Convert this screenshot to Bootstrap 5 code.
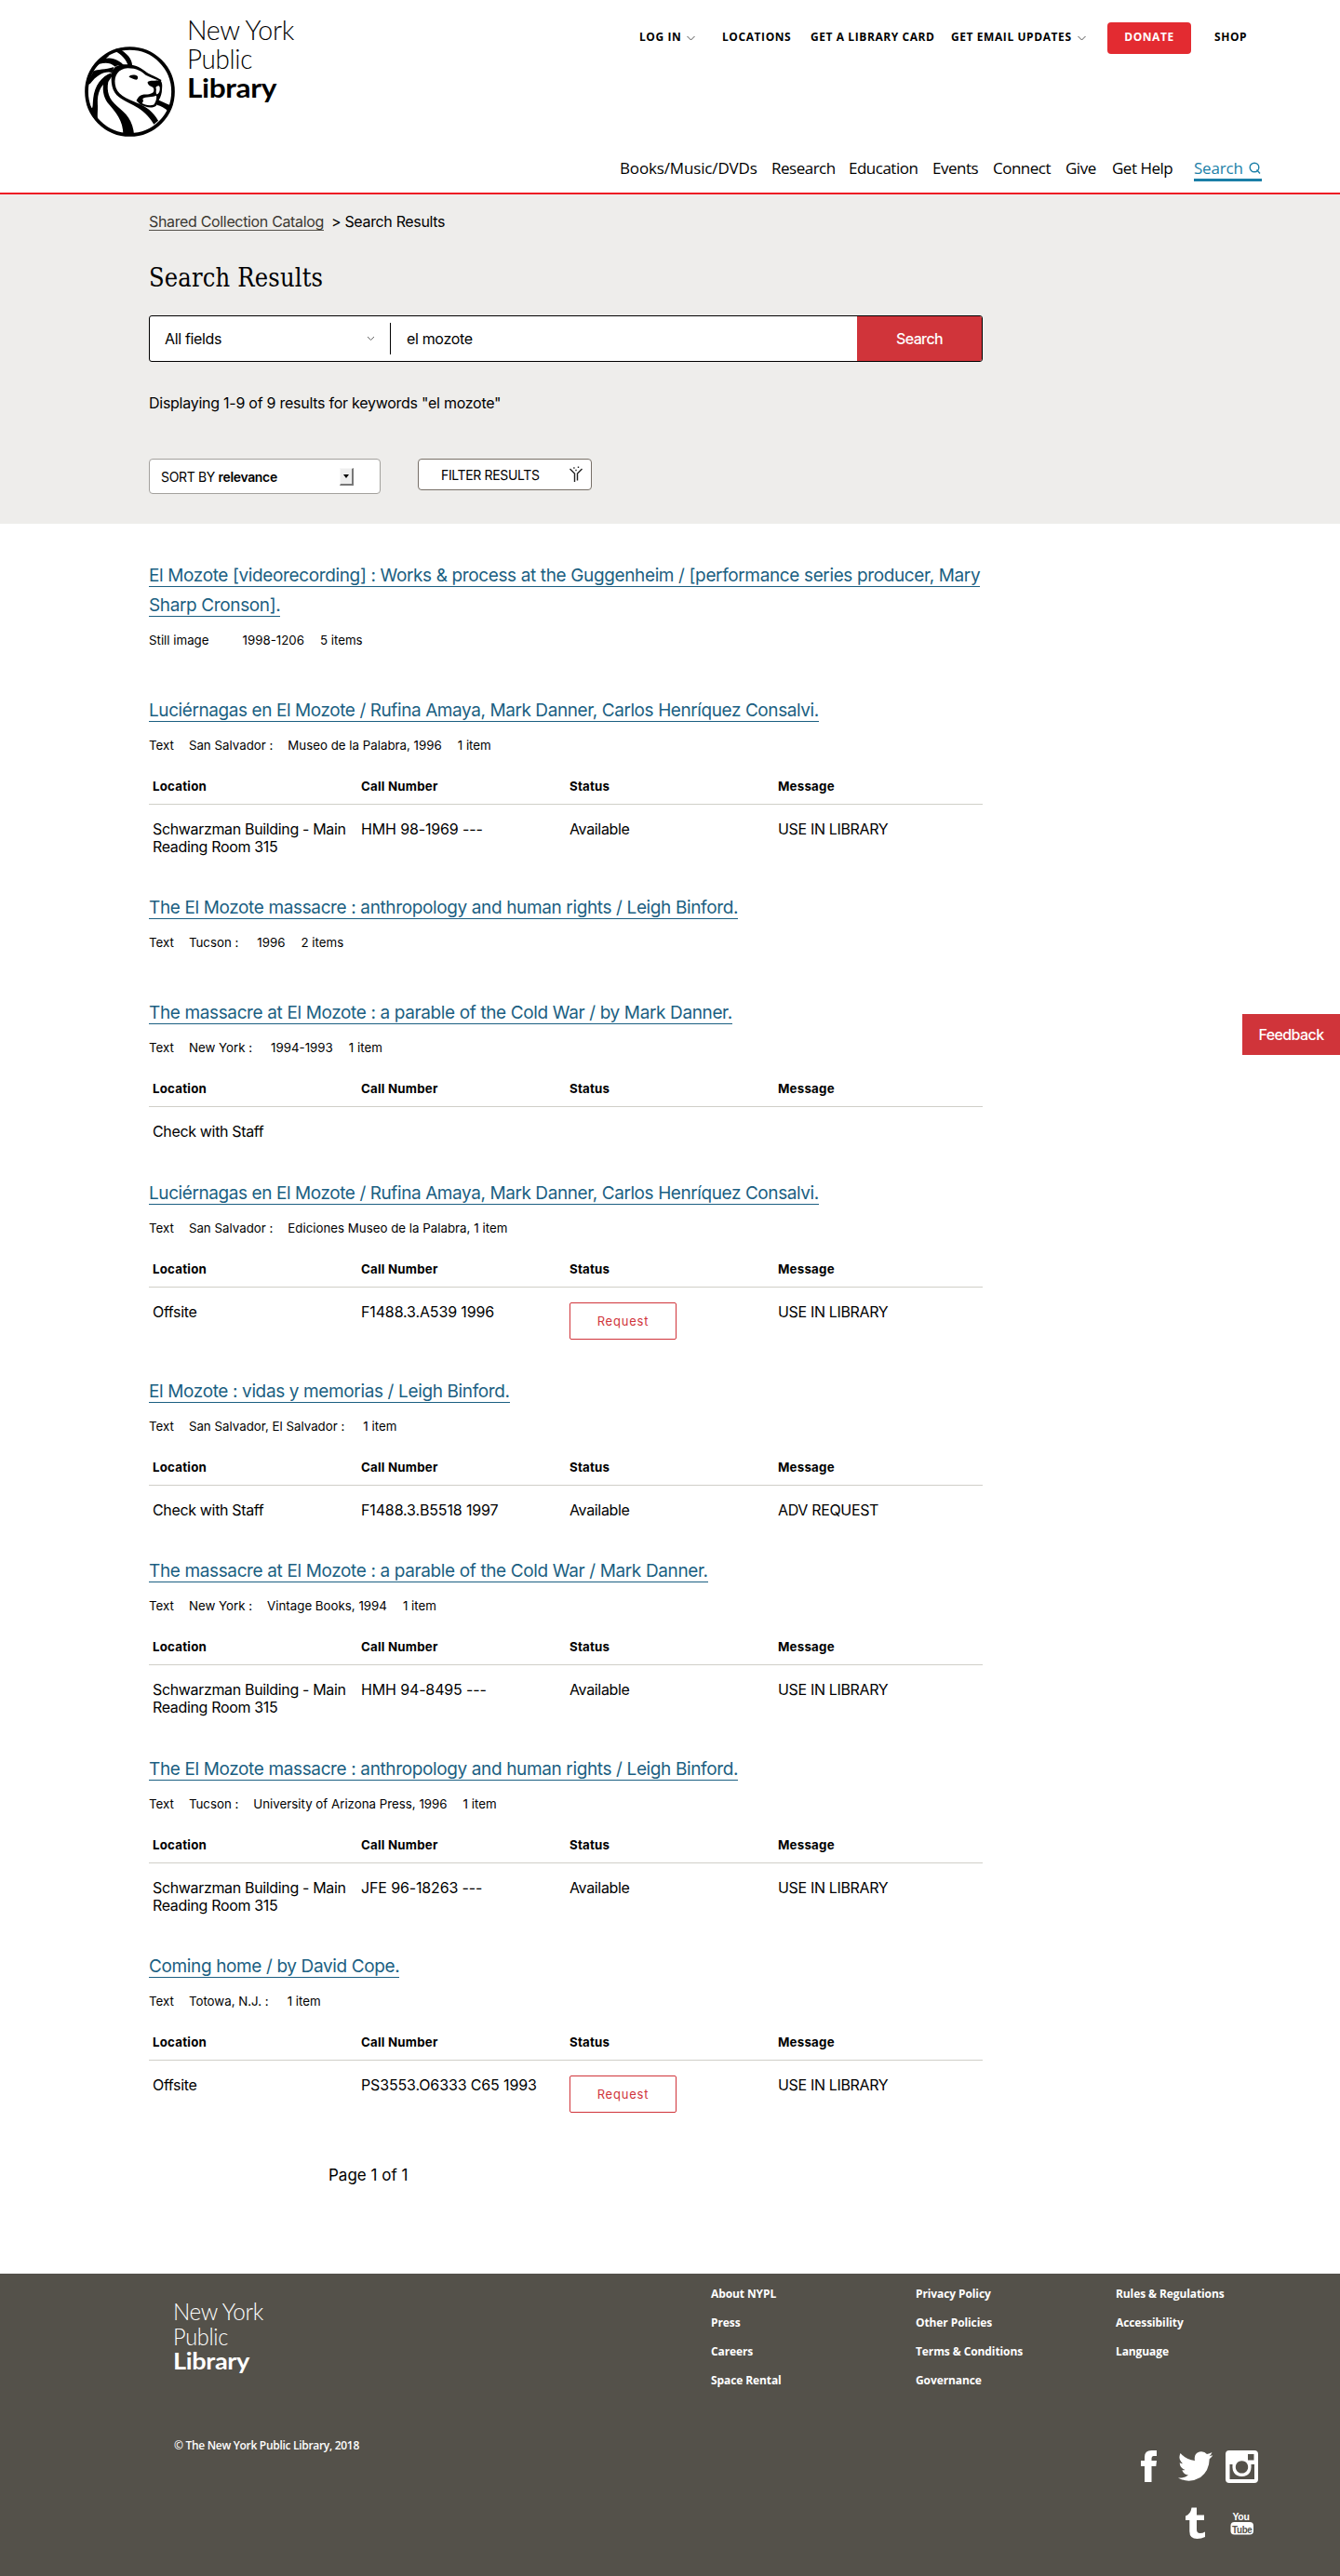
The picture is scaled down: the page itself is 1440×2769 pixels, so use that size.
<!DOCTYPE html>
<html lang="en">
<head>
<meta charset="utf-8">
<title>Shared Collection Catalog | NYPL</title>
<meta name="viewport" content="width=device-width, initial-scale=1">
<link rel="stylesheet" href="https://cdn.jsdelivr.net/npm/bootstrap@5.3.0/dist/css/bootstrap.min.css">
<style>
body{font-family:Inter,"Liberation Sans",sans-serif;font-size:16px;letter-spacing:-.34px;color:#000;background:#fff}
a{color:inherit;text-decoration:none}
.wrap{width:896px;margin-left:160px}
.kievit{font-family:"Open Sans","Noto Sans",sans-serif}
/* header */
.site-head{height:209px;border-bottom:2px solid #ed1c24;padding-left:91px}
.lion{width:97px;height:97px;margin-top:50px}
.wordmark{margin:12px 0 0 12px}
.util-nav{display:grid;grid-template-columns:89px 95px 151px 168px 115px 36px;height:34px;margin:24px 0 0 596px;font-size:12px;font-weight:700;line-height:32px;letter-spacing:.58px;white-space:nowrap}
.util-nav svg{margin-left:6px}
.donate{width:90px;height:34px;background:#e32b31;color:#fff;border-radius:4px;text-align:center}
.main-nav{display:grid;grid-template-columns:163px 83px 90px 65px 78px 50px 88px 73px;margin:111px 0 0 575px;font-size:17px;line-height:24px;letter-spacing:-.5px;white-space:nowrap}
.main-nav .wide{letter-spacing:-.15px}
.main-nav .find{color:#1b7fa7;border-bottom:3px solid #1b7fa7;height:26px;letter-spacing:-.2px}
/* search band */
.band{background:#eeedeb;height:354px;padding-top:17px}
.crumbs{line-height:24px;height:24px}
.crumbs a{color:#3b3832;border-bottom:1px solid #54514a;line-height:18px;display:inline-block;margin-right:8px}
.page-title{font-family:"DejaVu Serif Condensed","DejaVu Serif",serif;font-size:27px;font-stretch:condensed;line-height:36px;letter-spacing:.17px;font-weight:400;margin:31px 0 0}
.search-box{height:50px;border:1px solid #000;border-radius:3px;background:#fff;margin-top:22px;overflow:hidden}
.fields{width:259px;height:34px;border-right:1px solid #000;padding:0 16px 0 16px}
.term{padding-left:17px}
.go{width:134px;background:#d0343a;color:#fff;font-weight:500;letter-spacing:-.6px}
.tally{margin-top:32px;line-height:24px;letter-spacing:-.26px}
.sort{width:249px;height:38px;border:1px solid #a3a19d;border-radius:4px;background:#fff;font-size:14px;padding:1px 28px 0 12px}
.sort .drop{width:15px;height:19px;background:#eee;border:1px solid #f7f7f7;border-right:2px solid #777;border-bottom:2px solid #777}
.filter{width:187px;height:34px;border:1px solid #776f67;border-radius:4px;background:#fff;font-size:14px;margin-left:40px;padding:0 9px 0 24px}
/* results */
.results{padding-top:40px}
.hit-title{font-size:19px;line-height:32px;font-weight:400;letter-spacing:-.37px;margin:0;color:#1b5f82}
.hit-title.tight{letter-spacing:-.42px}
.hit-title a{border-bottom:1px solid #1b5f82}
.meta{font-size:13.3px;line-height:20px;letter-spacing:0;margin-top:11px;white-space:pre}
.meta span{margin-right:16px}
.meta span:nth-last-child(2){margin-right:17px}
.meta span.wide-gap{margin-right:20px}
.hit{padding-bottom:50px}
.hit.held{padding-bottom:40.35px}
.hit.closing{padding-bottom:51px}
.holdings{table-layout:fixed;margin:24px 0 0;--bs-table-color:#000;--bs-table-bg:transparent}
.holdings th{font-size:13.3px;line-height:20px;font-weight:700;letter-spacing:.22px;padding:0 4px 9px;border-bottom:1px solid #d0cfc8}
.holdings td{line-height:19px;padding:17px 4px 0;border:0;letter-spacing:-.34px;height:36px}
.holdings td:nth-child(2){letter-spacing:-.14px}
.ask{width:115px;height:40px;border:1px solid #d0343a;border-radius:2px;color:#d0343a;font-size:13px;letter-spacing:.8px;line-height:38px;text-align:center;display:block}
.holdings td.act{padding-top:16px}
.pager{margin:4px 0 0 353px;height:118px;line-height:24px;font-size:17px;letter-spacing:0}
/* footer */
.site-foot{background:#54514a;color:#fff;height:325px;padding:12px 0 0 185px}
.foot-mark{margin-top:14px}
.foot-links{display:grid;grid-template-columns:220px 215px 150px;margin-left:479px;font-size:12px;font-weight:700;letter-spacing:-.1px;line-height:31px;margin-top:-6px;height:130px}
.foot-links a{display:block}
.copy{font-size:12px;font-weight:600;letter-spacing:-.3px;line-height:22px;padding-left:2px}
.social{margin:16px 86px 0 0}
.feedback{position:fixed;right:0;top:1090px;width:105px;height:44px;background:#d0343a;color:#fff;font-weight:500;line-height:44px;letter-spacing:-.6px;text-align:center}
</style>
</head>
<body>

<header class="site-head kievit d-flex">
  <svg class="lion flex-shrink-0" viewBox="18.500 14.500 289 289">
    <defs><clipPath id="disc"><circle cx="163" cy="159" r="143"/></clipPath></defs>
    <circle cx="163" cy="159" r="138.500" fill="#fff" stroke="#000" stroke-width="11"/>
    <g clip-path="url(#disc)">
      <path d="M117 30C136 40 152 55 158 78L171 79C171 60 162 44 136 26L150 18L110 20Z"/>
      <path d="M66 60C72 48 88 42 96 44C90 50 88 50 88 53C108 48 132 60 146 77C128 74 126 74 116 79C98 64 84 66 66 70C56 78 50 86 46 94C42 100 34 108 28 100Z"/>
      <path d="M46 94C60 86 84 90 112 80L106 98C84 92 58 104 36 134L22 140Z"/>
      <path d="M106 98C72 110 50 140 46 180C44 200 45 208 42 212C36 206 34 196 32 190L22 200L44 250L64 262C56 240 62 218 60 200C58 160 72 138 90 126Z"/>
      <path d="M80 126C74 150 78 175 92 195C118 226 142 250 142 300L177 300C174 250 150 228 122 205C96 184 88 158 94 128L112 100L92 106Z"/>
      <path d="M106 92C100 130 106 160 128 176C154 198 208 206 240 264L254 252C238 224 214 206 192 198C150 180 120 168 116 136C112 108 126 86 156 84C186 84 200 94 214 106C232 116 248 118 262 128L264 122C246 110 230 106 218 98C200 84 184 74 158 72C130 70 116 76 106 92Z"/>
      <path d="M160 112C164 104 180 104 188 110C190 116 188 120 184 121C174 119 170 116 160 112Z"/>
      <path d="M220 128C228 122 246 126 258 122C266 126 268 136 266 150C266 164 262 176 256 186C252 196 250 206 240 208C226 212 212 208 196 200L184 188C190 176 196 168 214 168C230 168 240 164 240 154C240 148 238 144 230 142C222 138 220 134 220 128Z"/>
      <path fill="#fff" d="M246 146C250 140 258 138 259 146C260 158 256 164 250 168C244 160 250 152 246 146Z"/>
      <path fill="#fff" d="M204 182C214 174 238 178 248 172C250 184 244 196 240 201C224 206 210 200 202 196C208 190 206 186 204 182Z"/>
      <path d="M252 184C264 190 276 196 296 204L288 224C274 210 262 204 250 202Z"/>
    </g>
  </svg>
  <svg class="wordmark flex-shrink-0" width="120" height="105" font-family="Lato" font-size="28.500">
    <g font-weight="300"><text x="1" y="31" textLength="115" lengthAdjust="spacingAndGlyphs">New York</text><text x="1" y="62" textLength="70" lengthAdjust="spacingAndGlyphs">Public</text></g>
    <text x="1" y="93" font-weight="700" textLength="96" lengthAdjust="spacingAndGlyphs">Library</text>
  </svg>
  <div style="margin-left:-229px">
    <nav class="util-nav">
      <a href="#">LOG IN<svg width="9" height="6" fill="none" stroke="#555"><path d="M.5 1L4.500 5L8.500 1"/></svg></a>
      <a href="#">LOCATIONS</a><a href="#">GET A LIBRARY CARD</a>
      <a href="#">GET EMAIL UPDATES<svg width="9" height="6" fill="none" stroke="#555"><path d="M.5 1L4.500 5L8.500 1"/></svg></a>
      <a href="#" class="donate">DONATE</a><a href="#">SHOP</a>
    </nav>
    <nav class="main-nav">
      <a href="#" class="wide">Books/Music/DVDs</a><a href="#">Research</a><a href="#">Education</a><a href="#">Events</a><a href="#">Connect</a><a href="#">Give</a><a href="#">Get Help</a>
      <a href="#" class="find d-flex justify-content-between align-items-center">Search<svg width="14" height="14" fill="none" stroke="#1b7fa7" stroke-width="1.400"><circle cx="6" cy="6" r="4.800"/><path d="M8.500 8.500L12 12.500"/></svg></a>
    </nav>
  </div>
</header>

<section class="band">
  <div class="wrap">
    <div class="crumbs"><a href="#">Shared Collection Catalog</a>&gt; Search Results</div>
    <h1 class="page-title">Search Results</h1>
    <form class="search-box d-flex align-items-center">
      <div class="fields d-flex align-items-center justify-content-between">All fields<svg width="9" height="6" fill="none" stroke="#666"><path d="M1 1L4.500 4.500L8 1"/></svg></div>
      <div class="term flex-grow-1">el mozote</div>
      <div class="go align-self-stretch d-flex align-items-center justify-content-center">Search</div>
    </form>
    <p class="tally mb-0">Displaying 1-9 of 9 results for keywords "el mozote"</p>
    <div class="d-flex align-items-start mt-5">
      <div class="sort d-flex align-items-center justify-content-between"><span>SORT BY <b class="fw-semibold">relevance</b></span>
        <span class="drop d-flex align-items-center justify-content-center"><svg width="6" height="4"><path d="M0 0H6L3 4Z"/></svg></span></div>
      <div class="filter d-flex align-items-center justify-content-between">FILTER RESULTS
        <svg width="14" height="18" viewBox="0 0 14 18" fill="none" stroke="#222" stroke-width="1.400"><path d="M.5 3L5.500 8V17M13.500 3L8.500 8V15.500"/><path d="M4.200 2H5.600M6.300 4.500H7.700M8.800 1.200H10.200" stroke-width="1.500"/></svg></div>
    </div>
  </div>
</section>

<main class="wrap results">
  <article class="hit"><h2 class="hit-title"><a href="#">El Mozote [videorecording] : Works &amp; process at the Guggenheim / [performance series producer, Mary Sharp Cronson].</a></h2>
    <div class="meta d-flex"><span>Still image</span><span class="wide-gap"></span><span>1998-1206</span><span>5 items</span></div></article>

  <article class="hit held"><h2 class="hit-title tight"><a href="#">Luciérnagas en El Mozote / Rufina Amaya, Mark Danner, Carlos Henríquez Consalvi.</a></h2>
    <div class="meta d-flex"><span>Text</span><span>San Salvador :</span><span>Museo de la Palabra, 1996</span><span>1 item</span></div>
    <table class="table holdings"><thead><tr><th>Location</th><th>Call Number</th><th>Status</th><th>Message</th></tr></thead>
    <tbody><tr><td>Schwarzman Building - Main Reading Room 315</td><td>HMH 98-1969 ---</td><td>Available</td><td>USE IN LIBRARY</td></tr></tbody></table></article>

  <article class="hit"><h2 class="hit-title"><a href="#">The El Mozote massacre : anthropology and human rights / Leigh Binford.</a></h2>
    <div class="meta d-flex"><span>Text</span><span class="wide-gap">Tucson :</span><span>1996</span><span>2 items</span></div></article>

  <article class="hit held"><h2 class="hit-title"><a href="#">The massacre at El Mozote : a parable of the Cold War / by Mark Danner.</a></h2>
    <div class="meta d-flex"><span>Text</span><span class="wide-gap">New York :</span><span>1994-1993</span><span>1 item</span></div>
    <table class="table holdings"><thead><tr><th>Location</th><th>Call Number</th><th>Status</th><th>Message</th></tr></thead>
    <tbody><tr><td>Check with Staff</td><td></td><td></td><td></td></tr></tbody></table></article>

  <article class="hit held"><h2 class="hit-title tight"><a href="#">Luciérnagas en El Mozote / Rufina Amaya, Mark Danner, Carlos Henríquez Consalvi.</a></h2>
    <div class="meta d-flex"><span>Text</span><span>San Salvador :</span><span class="me-1">Ediciones Museo de la Palabra,</span><span>1 item</span></div>
    <table class="table holdings"><thead><tr><th>Location</th><th>Call Number</th><th>Status</th><th>Message</th></tr></thead>
    <tbody><tr><td>Offsite</td><td>F1488.3.A539 1996</td><td class="act"><a href="#" class="ask">Request</a></td><td>USE IN LIBRARY</td></tr></tbody></table></article>

  <article class="hit held"><h2 class="hit-title"><a href="#">El Mozote : vidas y memorias / Leigh Binford.</a></h2>
    <div class="meta d-flex"><span>Text</span><span class="wide-gap">San Salvador, El Salvador :</span><span>1 item</span></div>
    <table class="table holdings"><thead><tr><th>Location</th><th>Call Number</th><th>Status</th><th>Message</th></tr></thead>
    <tbody><tr><td>Check with Staff</td><td>F1488.3.B5518 1997</td><td>Available</td><td>ADV REQUEST</td></tr></tbody></table></article>

  <article class="hit held"><h2 class="hit-title"><a href="#">The massacre at El Mozote : a parable of the Cold War / Mark Danner.</a></h2>
    <div class="meta d-flex"><span>Text</span><span>New York :</span><span>Vintage Books, 1994</span><span>1 item</span></div>
    <table class="table holdings"><thead><tr><th>Location</th><th>Call Number</th><th>Status</th><th>Message</th></tr></thead>
    <tbody><tr><td>Schwarzman Building - Main Reading Room 315</td><td>HMH 94-8495 ---</td><td>Available</td><td>USE IN LIBRARY</td></tr></tbody></table></article>

  <article class="hit held"><h2 class="hit-title"><a href="#">The El Mozote massacre : anthropology and human rights / Leigh Binford.</a></h2>
    <div class="meta d-flex"><span>Text</span><span>Tucson :</span><span>University of Arizona Press, 1996</span><span>1 item</span></div>
    <table class="table holdings"><thead><tr><th>Location</th><th>Call Number</th><th>Status</th><th>Message</th></tr></thead>
    <tbody><tr><td>Schwarzman Building - Main Reading Room 315</td><td>JFE 96-18263 ---</td><td>Available</td><td>USE IN LIBRARY</td></tr></tbody></table></article>

  <article class="hit closing"><h2 class="hit-title"><a href="#">Coming home / by David Cope.</a></h2>
    <div class="meta d-flex"><span>Text</span><span class="wide-gap">Totowa, N.J. :</span><span>1 item</span></div>
    <table class="table holdings"><thead><tr><th>Location</th><th>Call Number</th><th>Status</th><th>Message</th></tr></thead>
    <tbody><tr><td>Offsite</td><td>PS3553.O6333 C65 1993</td><td class="act"><a href="#" class="ask">Request</a></td><td>USE IN LIBRARY</td></tr></tbody></table></article>
</main>
<div class="pager">Page 1 of 1</div>

<footer class="site-foot kievit">
  <div class="d-flex align-items-start">
    <svg class="foot-mark flex-shrink-0" width="100" height="88" fill="#fff" font-family="Lato" font-size="24.500">
      <g font-weight="300"><text x="1" y="24" textLength="97" lengthAdjust="spacingAndGlyphs">New York</text><text x="1" y="51" textLength="59" lengthAdjust="spacingAndGlyphs">Public</text></g>
      <text x="1" y="77" font-weight="700" textLength="82" lengthAdjust="spacingAndGlyphs">Library</text>
    </svg>
    <div class="foot-links">
      <div><a href="#">About NYPL</a><a href="#">Press</a><a href="#">Careers</a><a href="#">Space Rental</a></div>
      <div><a href="#">Privacy Policy</a><a href="#">Other Policies</a><a href="#">Terms &amp; Conditions</a><a href="#">Governance</a></div>
      <div><a href="#">Rules &amp; Regulations</a><a href="#">Accessibility</a><a href="#">Language</a></div>
    </div>
  </div>
  <div class="d-flex justify-content-between" style="margin-top:38px">
    <div class="copy">© The New York Public Library, 2018</div>
    <svg class="social" width="130" height="100" viewBox="1224 2634 130 100" fill="#fff">
      <path d="M1230 2668V2651H1226V2645H1230V2641Q1230 2634 1237.500 2634H1243V2640H1239.500Q1237.500 2640 1237.500 2642.500V2645H1243L1242.300 2651H1237.500V2668Z"/>
      <path d="M1266 2663.500Q1272.500 2664 1277 2660.500Q1272 2660 1270.300 2655.200Q1272 2655.500 1273.500 2655Q1268 2653 1267.700 2647.200Q1269.200 2648 1271 2648.200Q1265.500 2643.500 1268.500 2637Q1275 2644.500 1284 2645Q1282.500 2637.500 1289 2635.500Q1294 2634.500 1297 2638Q1300 2637.500 1302.500 2636Q1301.500 2639 1299.300 2640.300Q1301.500 2640 1303.300 2639.300Q1302 2641.700 1299.700 2643.300Q1299.500 2656 1290 2663Q1278 2670 1266 2663.500Z"/>
      <path fill-rule="evenodd" d="M1321 2634H1348Q1352 2634 1352 2638V2665Q1352 2669 1348 2669H1321Q1317 2669 1317 2665V2638Q1317 2634 1321 2634ZM1341 2638V2644.500H1347.500V2638ZM1321.500 2649V2665H1348V2649H1344.500Q1345.500 2661.500 1334.500 2662Q1323.500 2661.500 1324.500 2649ZM1334.500 2645.200A6.700 6.700 0 1 0 1334.510 2645.200Z"/>
      <path d="M1280.500 2695.500H1286V2703.500H1294V2709H1286V2719Q1286 2723 1289.500 2723Q1292.500 2723 1295 2721.500V2727Q1291 2729 1286.500 2729Q1278.300 2729 1278.300 2721V2709H1274V2704.500Q1279.500 2702.500 1280.500 2695.500Z"/>
      <rect x="1322.500" y="2711" width="24.500" height="13.500" rx="4"/>
      <text x="1324.500" y="2709" font-size="11.500" font-weight="700" font-family="'Liberation Sans'" textLength="18" lengthAdjust="spacingAndGlyphs">You</text>
      <text x="1324" y="2722.500" font-size="11.500" font-weight="700" font-family="'Liberation Sans'" fill="#54514a" textLength="21.500" lengthAdjust="spacingAndGlyphs">Tube</text>
    </svg>
  </div>
</footer>

<a href="#" class="feedback">Feedback</a>
<script src="https://cdn.jsdelivr.net/npm/bootstrap@5.3.0/dist/js/bootstrap.bundle.min.js"></script>
</body>
</html>
